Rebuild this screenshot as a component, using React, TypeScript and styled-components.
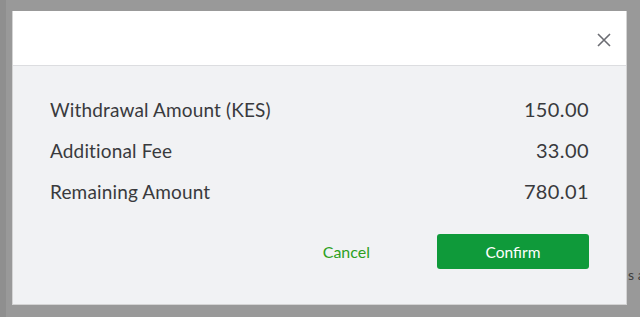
import React from "react";
import styled, { createGlobalStyle } from "styled-components";

const GlobalStyle = createGlobalStyle`
  html, body {
    margin: 0;
    padding: 0;
    background: #999999;
  }
  * { box-sizing: border-box; }
`;

const rows = [
  { label: "Withdrawal Amount (KES)", value: "150.00" },
  { label: "Additional Fee", value: "33.00" },
  { label: "Remaining Amount", value: "780.01" },
];

const App = () => {
  return (
    <Screen>
      <GlobalStyle />
      <SideStrip />
      <PageBehind>s a</PageBehind>
      <Modal>
        <Header>
          <CloseButton aria-label="Close">
            <svg width="14" height="14" viewBox="0 0 14 14">
              <path d="M1 1L13 13M13 1L1 13" stroke="#6b6c72" strokeWidth="1.6" fill="none" />
            </svg>
          </CloseButton>
        </Header>
        <Body>
          <Rows>
            {rows.map((r) => (
              <Row key={r.label}>
                <span>{r.label}</span>
                <Value>{r.value}</Value>
              </Row>
            ))}
          </Rows>
          <Actions>
            <CancelButton>Cancel</CancelButton>
            <ConfirmButton>Confirm</ConfirmButton>
          </Actions>
        </Body>
      </Modal>
    </Screen>
  );
};

const Screen = styled.div`
  position: relative;
  width: 640px;
  height: 317px;
  background: #999999;
  display: flex;
  align-items: flex-start;
  overflow: hidden;
  font-family: Lato, "Open Sans", sans-serif;
`;

const SideStrip = styled.div`
  width: 6px;
  height: 100%;
  background: #8f8f8f;
`;

const PageBehind = styled.div`
  position: absolute;
  left: 628px;
  top: 266px;
  font-size: 14px;
  color: #3f3f3f;
  white-space: nowrap;
`;

const Modal = styled.div`
  position: relative;
  z-index: 1;
  margin: 11px 0 0 6px;
  width: 615px;
  height: 294px;
  display: flex;
  flex-direction: column;
  border: 1px solid #d4d4d4;
  border-top: none;
  background: #f1f2f4;
`;

const Header = styled.div`
  height: 55px;
  background: #ffffff;
  border-bottom: 1px solid #dcdde0;
  display: flex;
  align-items: center;
  justify-content: flex-end;
  padding: 4px 15px 0 0;
`;

const CloseButton = styled.button`
  border: none;
  background: none;
  padding: 0;
  width: 14px;
  height: 14px;
  display: flex;
  cursor: pointer;
`;

const Body = styled.div`
  flex: 1;
  padding: 31px 37px 0 37px;
  display: flex;
  flex-direction: column;
`;

const Rows = styled.div`
  display: flex;
  flex-direction: column;
  gap: 17px;
`;

const Row = styled.div`
  display: flex;
  justify-content: space-between;
  align-items: center;
  height: 24px;
  font-size: 19px;
  letter-spacing: 0.15px;
  color: #393a3d;
`;

const Value = styled.span`
  font-size: 20px;
  letter-spacing: 0.4px;
`;

const Actions = styled.div`
  margin-top: 31px;
  display: flex;
  justify-content: flex-end;
  align-items: center;
  gap: 67px;
`;

const CancelButton = styled.button`
  border: none;
  background: none;
  padding: 0;
  font-family: inherit;
  font-size: 16px;
  color: #2ca01c;
  cursor: pointer;
`;

const ConfirmButton = styled.button`
  width: 152px;
  height: 35px;
  border: none;
  border-radius: 3px;
  background: #0f9a3a;
  color: #ffffff;
  font-family: inherit;
  font-size: 15.5px;
  cursor: pointer;
`;

export default App;
